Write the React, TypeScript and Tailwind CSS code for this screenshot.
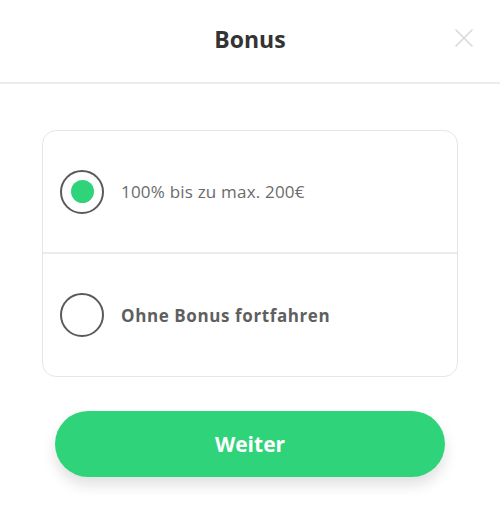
import React from "react";

export default function App() {
  return (
    <div className="w-[500px] h-[515px] bg-white" style={{ fontFamily: '"Open Sans", "Noto Sans", sans-serif' }}>
      <div className="relative h-[84px] border-b-2 border-[#ececec] flex items-center justify-center">
        <h1 className="text-[23px] font-bold text-[#333333] leading-none -mt-[4px]">Bonus</h1>
        <button className="absolute right-[27px] top-[29px] w-[18px] h-[18px] text-[#d9d9d9]" aria-label="close">
          <svg viewBox="0 0 18 18" width="18" height="18" fill="none" stroke="currentColor" strokeWidth="1.6" strokeLinecap="round">
            <path d="M1 1 L17 17 M17 1 L1 17" />
          </svg>
        </button>
      </div>
      <div className="px-[42px] pt-[46px]">
        <div className="rounded-[14px] border border-[#e6e6e6] flex flex-col">
          <div className="h-[123px] flex items-center gap-[17px] pl-[17px] border-b-2 border-[#ececec]">
            <div className="w-[44px] h-[44px] rounded-full border-2 border-[#5a5a5a] flex items-center justify-center">
              <div className="w-[23px] h-[23px] rounded-full bg-[#2fd47a]" />
            </div>
            <span className="text-[17px] tracking-[0.2px] text-[#6b6b6b]">100% bis zu max. 200€</span>
          </div>
          <div className="h-[122px] flex items-center gap-[17px] pl-[17px]">
            <div className="w-[44px] h-[44px] rounded-full border-2 border-[#5a5a5a]" />
            <span className="text-[17px] tracking-[0.6px] font-bold text-[#5f5f5f] mt-[1px]">Ohne Bonus fortfahren</span>
          </div>
        </div>
      </div>
      <div className="px-[55px] pt-[34px]">
        <button className="w-full h-[66px] rounded-full bg-[#2fd47a] text-white text-[21px] font-bold shadow-[0_8px_14px_rgba(0,0,0,0.12)]">
          <span className="relative top-[1px]">Weiter</span>
        </button>
      </div>
    </div>
  );
}
